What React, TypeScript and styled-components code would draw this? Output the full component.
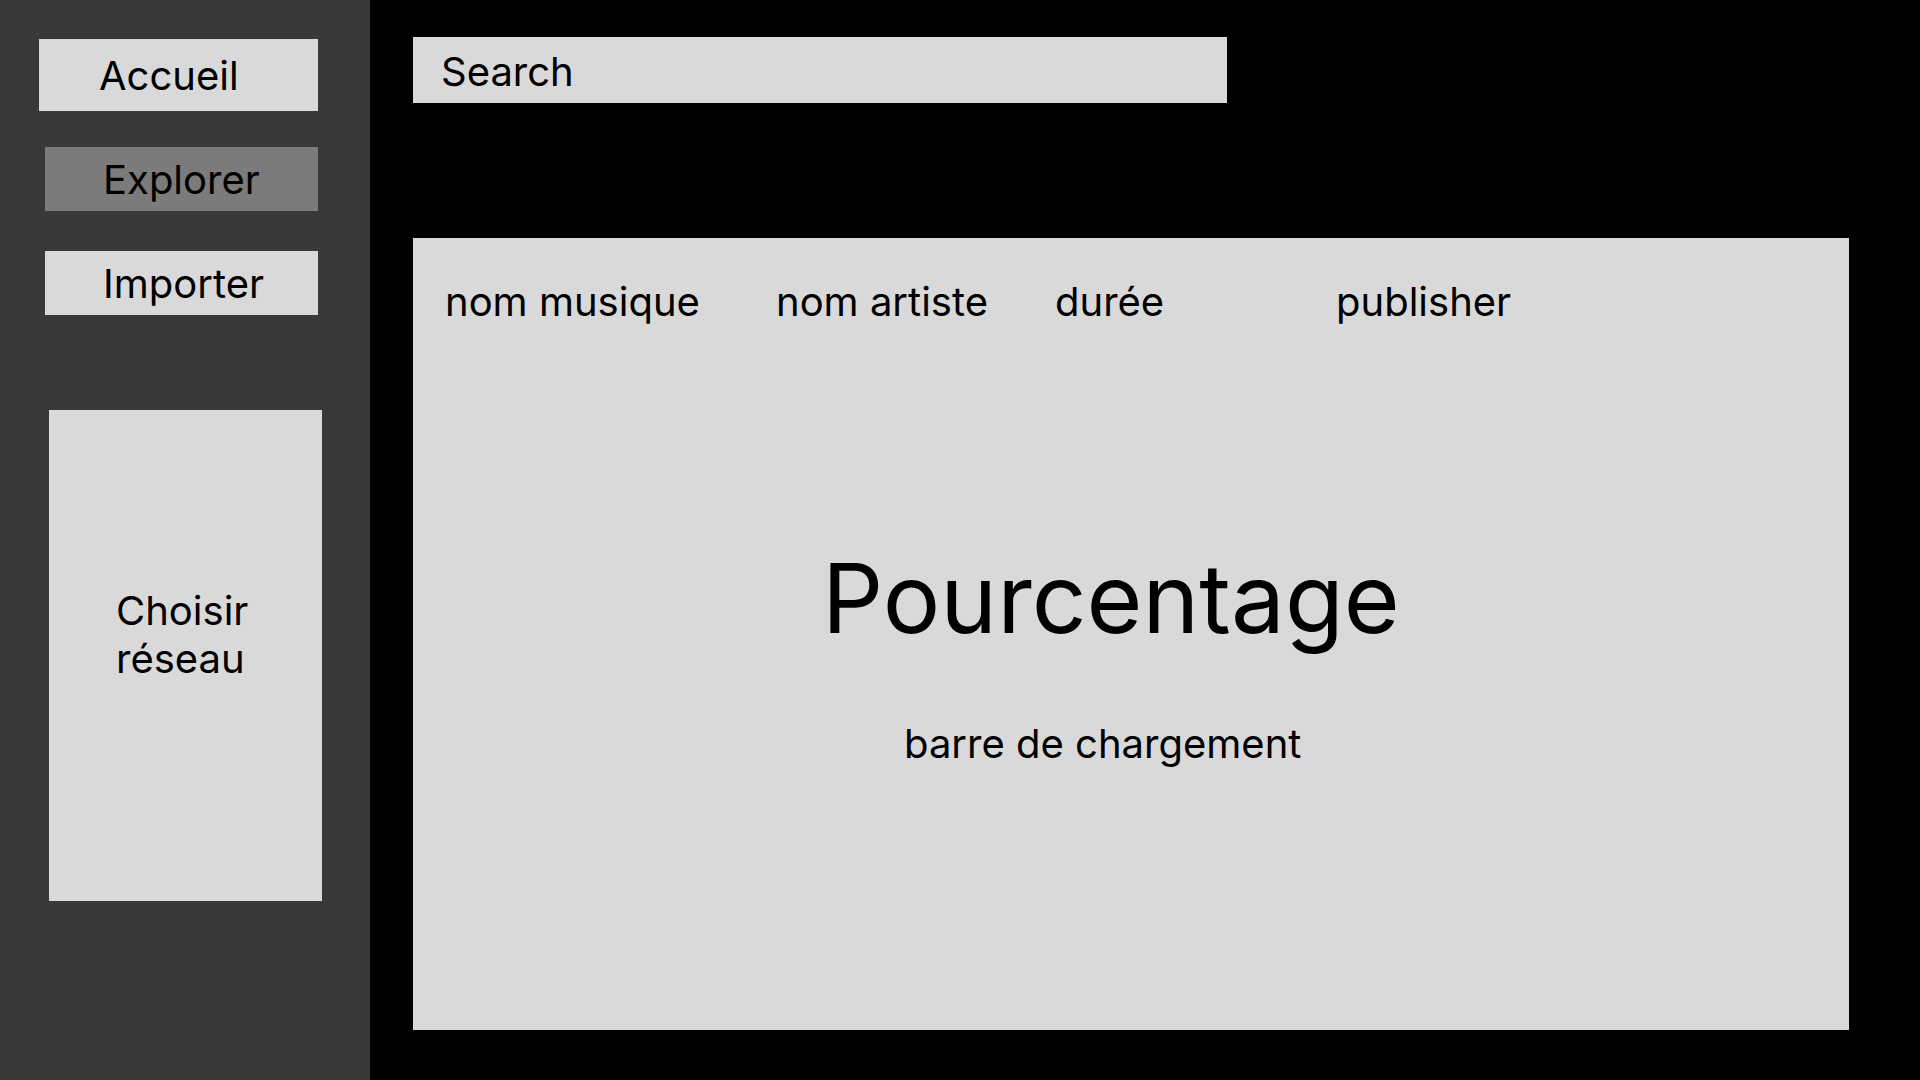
import styled, { createGlobalStyle } from "styled-components";

const GlobalStyle = createGlobalStyle`
  * {
    box-sizing: border-box;
  }

  html,
  body {
    margin: 0;
    padding: 0;
    background: #000;
    font-family: Inter, "Noto Sans", "Liberation Sans", sans-serif;
    color: #000;
  }
`;

const Screen = styled.div`
  display: flex;
  width: 1920px;
  height: 1080px;
  background: #000;
  overflow: hidden;
`;

const Sidebar = styled.nav`
  width: 370px;
  height: 100%;
  flex-shrink: 0;
  display: flex;
  flex-direction: column;
  padding-top: 39px;
  background: #393939;
`;

const NavButton = styled.div<{ $indent: number; $width: number; $height: number; $pad: number; $gap: number; $active?: boolean }>`
  display: flex;
  align-items: center;
  width: ${(p) => p.$width}px;
  height: ${(p) => p.$height}px;
  margin-left: ${(p) => p.$indent}px;
  margin-bottom: ${(p) => p.$gap}px;
  padding: 2px 0 0 ${(p) => p.$pad}px;
  background: ${(p) => (p.$active ? "#7b7b7b" : "#d9d9d9")};
  font-size: 40px;
  line-height: 48px;
  cursor: pointer;
`;

const NetworkPanel = styled.div`
  width: 273px;
  height: 491px;
  margin-left: 49px;
  margin-top: 95px;
  padding: 177px 0 0 67px;
  background: #d9d9d9;
  font-size: 40px;
  line-height: 48px;
`;

const Main = styled.main`
  flex: 1;
  display: flex;
  flex-direction: column;
  padding: 37px 0 0 43px;
`;

const SearchBar = styled.div`
  display: flex;
  align-items: center;
  width: 814px;
  height: 66px;
  padding: 3px 0 0 28px;
  background: #d9d9d9;
  font-size: 40px;
  line-height: 48px;
`;

const ContentPanel = styled.section`
  display: flex;
  flex-direction: column;
  width: 1436px;
  height: 792px;
  margin-top: 135px;
  padding: 40px 0 0 32px;
  background: #d9d9d9;
`;

const HeaderRow = styled.div`
  display: grid;
  grid-template-columns: 331px 279px 281px auto;
  font-size: 40px;
  line-height: 48px;
`;

const Percent = styled.div`
  margin: 214px 0 0 377px;
  font-size: 96px;
  line-height: 116px;
`;

const LoadLabel = styled.div`
  margin: 64px 0 0 459px;
  font-size: 40px;
  line-height: 48px;
`;

const navItems = [
  { label: "Accueil", indent: 39, width: 279, height: 72, pad: 60, gap: 36 },
  { label: "Explorer", indent: 45, width: 273, height: 64, pad: 58, gap: 40, active: true },
  { label: "Importer", indent: 45, width: 273, height: 64, pad: 58, gap: 0 },
];

const columns = ["nom musique", "nom artiste", "durée", "publisher"];

const App = () => {
  return (
    <>
      <GlobalStyle />
      <Screen>
        <Sidebar>
          {navItems.map((item) => (
            <NavButton
              key={item.label}
              $indent={item.indent}
              $width={item.width}
              $height={item.height}
              $pad={item.pad}
              $gap={item.gap}
              $active={item.active}
            >
              {item.label}
            </NavButton>
          ))}

          {/* choix du réseau */}
          <NetworkPanel>
            Choisir
            <br />
            réseau
          </NetworkPanel>
        </Sidebar>

        <Main>
          <SearchBar>Search</SearchBar>

          <ContentPanel>
            <HeaderRow>
              {columns.map((c) => (
                <span key={c}>{c}</span>
              ))}
            </HeaderRow>
            <Percent>Pourcentage</Percent>
            <LoadLabel>barre de chargement</LoadLabel>
          </ContentPanel>
        </Main>
      </Screen>
    </>
  );
};

export default App;
